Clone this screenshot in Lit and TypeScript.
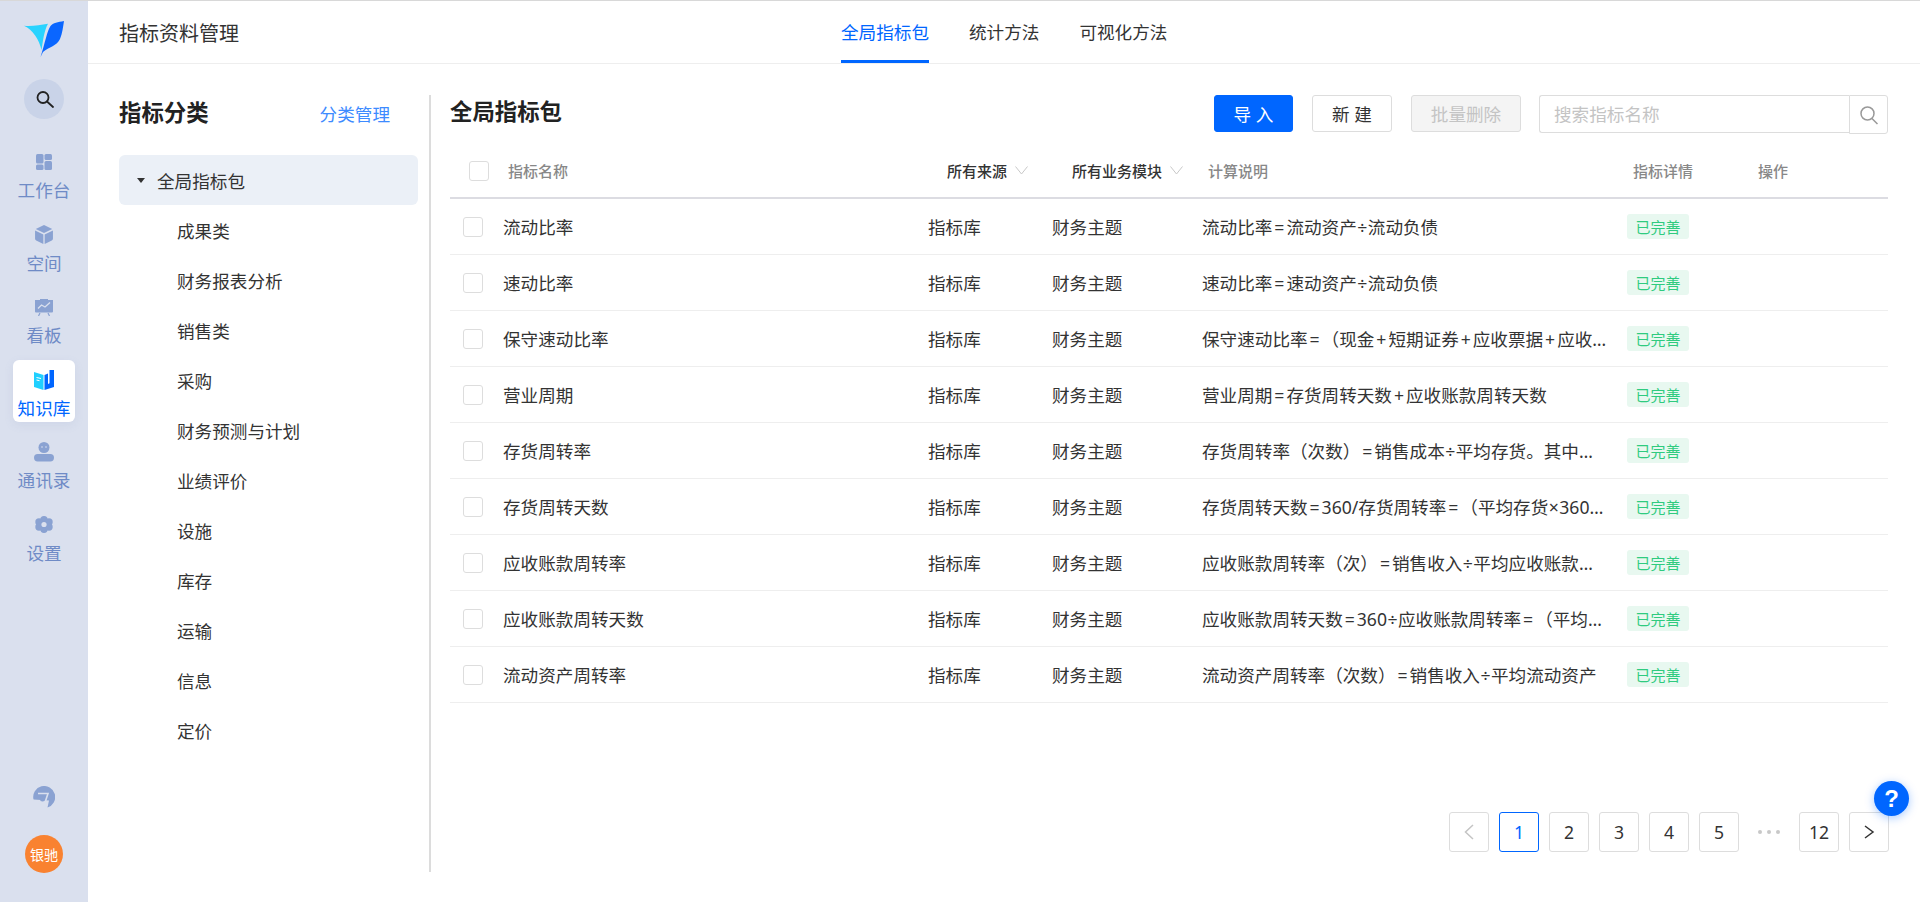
import { LitElement, css, html, svg } from 'lit'
import { customElement } from 'lit/decorators.js'

const rows = [
  ['流动比率', '流动比率=流动资产÷流动负债'],
  ['速动比率', '速动比率=速动资产÷流动负债'],
  ['保守速动比率', '保守速动比率=（现金+短期证券+应收票据+应收账款净额）÷流动负债'],
  ['营业周期', '营业周期=存货周转天数+应收账款周转天数'],
  ['存货周转率', '存货周转率（次数）=销售成本÷平均存货。其中，平均存货=（期初存货+期末存货）÷2'],
  ['存货周转天数', '存货周转天数=360/存货周转率=（平均存货×360）÷销售成本'],
  ['应收账款周转率', '应收账款周转率（次）=销售收入÷平均应收账款净额'],
  ['应收账款周转天数', '应收账款周转天数=360÷应收账款周转率=（平均应收账款×360）÷销售收入'],
  ['流动资产周转率', '流动资产周转率（次数）=销售收入÷平均流动资产'],
]

const categories = ['成果类', '财务报表分析', '销售类', '采购', '财务预测与计划', '业绩评价', '设施', '库存', '运输', '信息', '定价']

const navIcons: Record<string, unknown> = {
  workbench: svg`<rect x="0" y="0" width="7.500" height="9.500" rx="1.500"/><rect x="8.500" y="0" width="7.500" height="6" rx="1.500"/><rect x="0" y="10.500" width="7.500" height="5.500" rx="1.500"/><rect x="8.500" y="7" width="7.500" height="9" rx="1.500"/>`,
  space: svg`<path d="M8 0 15.400 3.600 8 7.200.6 3.600z"/><path d="M0 5 7.400 8.600V17L1 13.800C.4 13.500 0 13 0 12.300z"/><path d="M16 5 8.600 8.600V17L15 13.800c.6-.3 1-.8 1-1.500z"/>`,
  board: svg`<path d="M5 0h8v1H18v11.500a1 1 0 0 1-1 1H1a1 1 0 0 1-1-1V1h5z"/><path d="M3 9.500 6.500 6 10 8 15 3.500" fill="none" stroke="#dae0ee" stroke-width="1.300"/><path d="M5 14 3.500 17M13 14l1.500 3" fill="none" stroke="#8aa2d2" stroke-width="1.200"/>`,
  contacts: svg`<circle cx="10" cy="5.500" r="5.500"/><circle cx="8" cy="5" r=".8" fill="#dae0ee"/><circle cx="12" cy="5" r=".8" fill="#dae0ee"/><rect x="0" y="12" width="20" height="7.500" rx="3.700"/>`,
  settings: svg`<circle cx="9" cy="3.700" r="3.700"/><circle cx="9" cy="13.300" r="3.700"/><circle cx="4" cy="6" r="3.700"/><circle cx="14" cy="6" r="3.700"/><circle cx="4" cy="11" r="3.700"/><circle cx="14" cy="11" r="3.700"/><circle cx="9" cy="8.500" r="2.600" fill="#dae0ee"/>`,
}

const nav = [
  { key: 'workbench', label: '工作台', w: 16, h: 16, box: '0 0 16 16' },
  { key: 'space', label: '空间', w: 18, h: 19, box: '0 0 16 17' },
  { key: 'board', label: '看板', w: 18, h: 17, box: '0 0 18 17' },
  { key: 'book', label: '知识库', w: 20, h: 20, box: '0 0 20 20' },
  { key: 'contacts', label: '通讯录', w: 20, h: 20, box: '0 0 20 20' },
  { key: 'settings', label: '设置', w: 18, h: 17, box: '0 0 18 17' },
]

@customElement('app-root')
export class AppRoot extends LitElement {
  static styles = css`
    :host {
      display: flex;
      box-sizing: border-box;
      width: 1920px;
      height: 902px;
      overflow: hidden;
      background: #fff;
      border-top: 1px solid #d8d8d8;
      color: #333;
      font-family: "Noto Sans", "Noto Sans CJK SC", sans-serif;
      font-size: 17.6px;
      position: relative;
    }
    * { box-sizing: border-box; }

    .side {
      width: 88px;
      flex: none;
      background: #dae0ee;
      display: flex;
      flex-direction: column;
      align-items: center;
      padding-top: 20px;
    }
    .logo { width: 40px; height: 36px; display: block; }
    .search-circle {
      width: 40px;
      height: 40px;
      margin-top: 22px;
      border-radius: 50%;
      background: #c9d3e8;
      display: flex;
      align-items: center;
      justify-content: center;
    }
    .nav {
      margin-top: 23px;
      display: flex;
      flex-direction: column;
      gap: 10.5px;
    }
    .nav-item {
      width: 62px;
      height: 62px;
      border-radius: 6px;
      display: flex;
      flex-direction: column;
      align-items: center;
      color: #6f8bc6;
      line-height: 24px;
      white-space: nowrap;
    }
    .nav-item svg { fill: #8aa2d2; }
    .nav-item .ic { height: 36px; padding-top: 4px; display: flex; align-items: center; justify-content: center; }
    .nav-item.active {
      background: #fff;
      color: #0066ff;
      box-shadow: 0 3px 10px rgba(120, 140, 190, 0.12);
    }
    .side-bottom {
      margin-top: auto;
      padding-bottom: 29px;
      display: flex;
      flex-direction: column;
      align-items: center;
      gap: 27px;
    }
    .avatar {
      width: 38px;
      height: 38px;
      border-radius: 50%;
      background: #f98230;
      color: #fff;
      font-size: 14px;
      display: flex;
      align-items: center;
      justify-content: center;
    }

    .main { flex: 1; min-width: 0; display: flex; flex-direction: column; }
    .header {
      height: 63px;
      flex: none;
      border-bottom: 1px solid #eee;
      display: flex;
      align-items: center;
      padding-left: 31px;
    }
    .header-title { font-size: 20px; color: #333; }
    .tabs {
      display: flex;
      gap: 40px;
      margin-left: 602px;
      height: 100%;
    }
    .tab {
      height: 100%;
      display: flex;
      align-items: center;
      color: #333;
      border-bottom: 3px solid transparent;
      padding-top: 1px;
    }
    .tab.active { color: #0066ff; border-bottom-color: #0066ff; }

    .body { flex: 1; min-height: 0; display: flex; padding: 31px 32px 30px 31px; }
    .left { width: 312px; flex: none; border-right: 2px solid #dcdcdc; }
    .left-head {
      display: flex;
      justify-content: space-between;
      align-items: center;
      width: 271px;
      height: 36px;
      margin-bottom: 24px;
    }
    .left-head b { font-size: 22.4px; color: #222; padding-bottom: 3px; }
    .link { color: #3d8bff; }
    .cat {
      height: 50px;
      display: flex;
      align-items: center;
      padding-left: 58px;
      width: 299px;
    }
    .cat.root {
      background: #ebf0f7;
      border-radius: 6px;
      padding-left: 18px;
      gap: 12px;
    }
    .caret { width: 0; height: 0; border: 4px solid transparent; border-top: 5px solid #333; border-bottom: 0; }

    .right { flex: 1; min-width: 0; padding-left: 19px; display: flex; flex-direction: column; }
    .toolbar { height: 39px; display: flex; align-items: flex-start; }
    .toolbar h2 { margin: 0; font-size: 22.4px; font-weight: 700; color: #222; line-height: 34px; margin-right: auto; }
    .btn {
      height: 37px;
      border: 1px solid #ddd;
      border-radius: 3px;
      background: #fff;
      color: #333;
      font: inherit;
      display: flex;
      align-items: center;
      justify-content: center;
      padding: 0;
    }
    .btn.primary { width: 79px; background: #0066ff; border-color: #0066ff; color: #fff; }
    .btn.new { width: 80px; margin-left: 19px; }
    .btn.off { width: 110px; margin-left: 19px; background: #f4f4f4; color: #c4c4c4; border-color: #ddd; }
    .search { margin-left: 18px; display: flex; }
    .search .input {
      width: 310px;
      height: 38px;
      border: 1px solid #ddd;
      border-right: 0;
      border-radius: 3px 0 0 3px;
      color: #c4c4c4;
      padding-left: 14px;
      line-height: 36px;
    }
    .search .go {
      width: 39px;
      height: 39px;
      border: 1px solid #ddd;
      border-radius: 0 3px 3px 0;
      display: flex;
      align-items: center;
      justify-content: center;
    }

    .thead {
      height: 65px;
      border-bottom: 2px solid #dcdce2;
      display: grid;
      grid-template-columns: 39px 439px 125px 136px 425px 125px 1fr;
      align-items: center;
      font-size: 15px;
      color: #888;
      font-weight: 500;
      padding: 10px 0 0 19px;
    }
    .thead .filter { color: #333; display: flex; align-items: center; gap: 8px; }
    .tr {
      height: 56px;
      border-bottom: 1px solid #eee;
      display: grid;
      grid-template-columns: 40px 425px 124px 150px 425px 1fr;
      align-items: center;
      padding-left: 13px;
    }
    .check { width: 20px; height: 20px; border: 1px solid #ddd; border-radius: 3px; background: #fff; }
    .desc { white-space: nowrap; overflow: hidden; text-overflow: ellipsis; padding-right: 20px; }
    .op { display: inline-block; width: 14px; text-align: center; }
    .op.small { width: 11px; }
    .badge {
      width: 62px;
      height: 25px;
      border-radius: 3px;
      background: #e8f8f0;
      color: #2fcb7f;
      font-size: 15px;
      display: flex;
      align-items: center;
      justify-content: center;
    }

    .pager { margin-top: auto; margin-bottom: 20px; display: flex; gap: 10px; justify-content: flex-end; margin-right: -1px; }
    .page {
      width: 40px;
      height: 40px;
      border: 1px solid #ddd;
      border-radius: 3px;
      display: flex;
      align-items: center;
      justify-content: center;
    }
    .page.current { border-color: #0066ff; color: #0066ff; }
    .dots { width: 40px; display: flex; align-items: center; justify-content: center; gap: 5px; }
    .dots i { width: 4px; height: 4px; border-radius: 50%; background: #c8c8c8; }

    .help {
      position: absolute;
      left: 1874px;
      top: 780px;
      width: 35px;
      height: 35px;
      border-radius: 50%;
      background: #0066ff;
      color: #fff;
      font: 700 24px/35px "Liberation Sans", sans-serif;
      text-align: center;
      box-shadow: 0 2px 10px rgba(0, 102, 255, 0.35);
    }
  `

  private navIcon(item: (typeof nav)[number]) {
    if (item.key === 'book') {
      return html`<svg width="20" height="20" viewBox="0 0 20 20" style="fill:none">
        <path d="M0 2 9.500 5V20L0 17z" fill="#1fd0ff"/>
        <path d="M10.500 5 14 3.500V14l1.500-.7V0H20v17l-9.500 3z" fill="#0066ff"/>
        <path d="M2.500 7.500 7 8.500M2.500 10l3 .7" stroke="#fff" stroke-width="1"/>
      </svg>`
    }
    return html`<svg width=${item.w} height=${item.h} viewBox=${item.box}>${navIcons[item.key]}</svg>`
  }

  private formula(text: string) {
    return text.split(/([=+÷×])/).map(part => {
      if (part === '=' || part === '+') return html`<span class="op">${part}</span>`
      if (part === '÷' || part === '×') return html`<span class="op small">${part}</span>`
      return part
    })
  }

  render() {
    return html`
      <aside class="side">
        <svg class="logo" viewBox="0 0 40 36">
          <path d="M0 4.700C8 5.500 16 4 24 2.700 20 10 19 20 17.500 29 15 18 9 9 0 4.700z" fill="#29d3ff"/>
          <path d="M40 0C34 1 29 2 26.500 5 23 10 21 22 16.500 36L19 31C25 26 33 25 36 18 38.500 12 39 6 40 0z" fill="#0a66ff"/>
        </svg>
        <div class="search-circle">
          <svg width="20" height="20" viewBox="0 0 20 20" fill="none" stroke="#222" stroke-width="1.800"><circle cx="9" cy="8.500" r="5.500"/><path d="M13 12.500 19 18" stroke-linecap="round"/></svg>
        </div>
        <nav class="nav">
          ${nav.map(n => html`
            <div class="nav-item ${n.key === 'book' ? 'active' : ''}">
              <span class="ic">${this.navIcon(n)}</span>
              <span>${n.label}</span>
            </div>
          `)}
        </nav>
        <div class="side-bottom">
          <svg width="22" height="22" viewBox="0 0 22 22"><path fill="#8aa2d2" d="M.5 13.500A11 11 0 1 1 14.500 21.500L16 14.500z"/><path d="M5 7.500H15L12.500 15" fill="none" stroke="#dae0ee" stroke-width="1.600"/><path d="M.5 13.500 5 17l9.500 4.500-3 1H0z" fill="#dae0ee"/><circle cx="9.500" cy="13" r="2.500" fill="#8aa2d2"/></svg>
          <div class="avatar">银驰</div>
        </div>
      </aside>

      <div class="main">
        <header class="header">
          <div class="header-title">指标资料管理</div>
          <div class="tabs">
            <div class="tab active">全局指标包</div>
            <div class="tab">统计方法</div>
            <div class="tab">可视化方法</div>
          </div>
        </header>

        <div class="body">
          <section class="left">
            <div class="left-head"><b>指标分类</b><span class="link">分类管理</span></div>
            <div class="cat root"><i class="caret"></i>全局指标包</div>
            ${categories.map(c => html`<div class="cat">${c}</div>`)}
          </section>

          <section class="right">
            <div class="toolbar">
              <h2>全局指标包</h2>
              <button class="btn primary">导 入</button>
              <button class="btn new">新 建</button>
              <button class="btn off">批量删除</button>
              <div class="search">
                <div class="input">搜索指标名称</div>
                <div class="go"><svg width="20" height="20" viewBox="0 0 20 20" fill="none" stroke="#999" stroke-width="1.500"><circle cx="8.500" cy="8.500" r="6.500"/><path d="M13 13.500 18.500 19"/></svg></div>
              </div>
            </div>
            <div class="thead">
              <span class="check"></span>
              <span>指标名称</span>
              <span class="filter">所有来源 ${this.chev()}</span>
              <span class="filter">所有业务模块 ${this.chev()}</span>
              <span>计算说明</span>
              <span>指标详情</span>
              <span>操作</span>
            </div>
            ${rows.map(r => html`
              <div class="tr">
                <span class="check"></span>
                <span>${r[0]}</span>
                <span>指标库</span>
                <span>财务主题</span>
                <span class="desc">${this.formula(r[1])}</span>
                <span class="badge">已完善</span>
              </div>
            `)}
            <div class="pager">
              <div class="page"><svg width="12" height="18" viewBox="0 0 12 18" fill="none" stroke="#c4c4c4" stroke-width="1.500"><path d="M10 2 2.500 9l7.500 7"/></svg></div>
              <div class="page current">1</div>
              <div class="page">2</div>
              <div class="page">3</div>
              <div class="page">4</div>
              <div class="page">5</div>
              <div class="dots"><i></i><i></i><i></i></div>
              <div class="page">12</div>
              <div class="page"><svg width="12" height="18" viewBox="0 0 12 18" fill="none" stroke="#333" stroke-width="1.500"><path d="M2 3l8 6-8 6"/></svg></div>
            </div>
          </section>
        </div>
      </div>
      <div class="help">?</div>
    `
  }

  private chev() {
    return html`<svg width="13" height="9" viewBox="0 0 13 9" fill="none" stroke="#c8c8c8" stroke-width="1"><path d="M.5.500l6 7.500 6-7.500"/></svg>`
  }
}

declare global {
  interface HTMLElementTagNameMap {
    'app-root': AppRoot
  }
}
